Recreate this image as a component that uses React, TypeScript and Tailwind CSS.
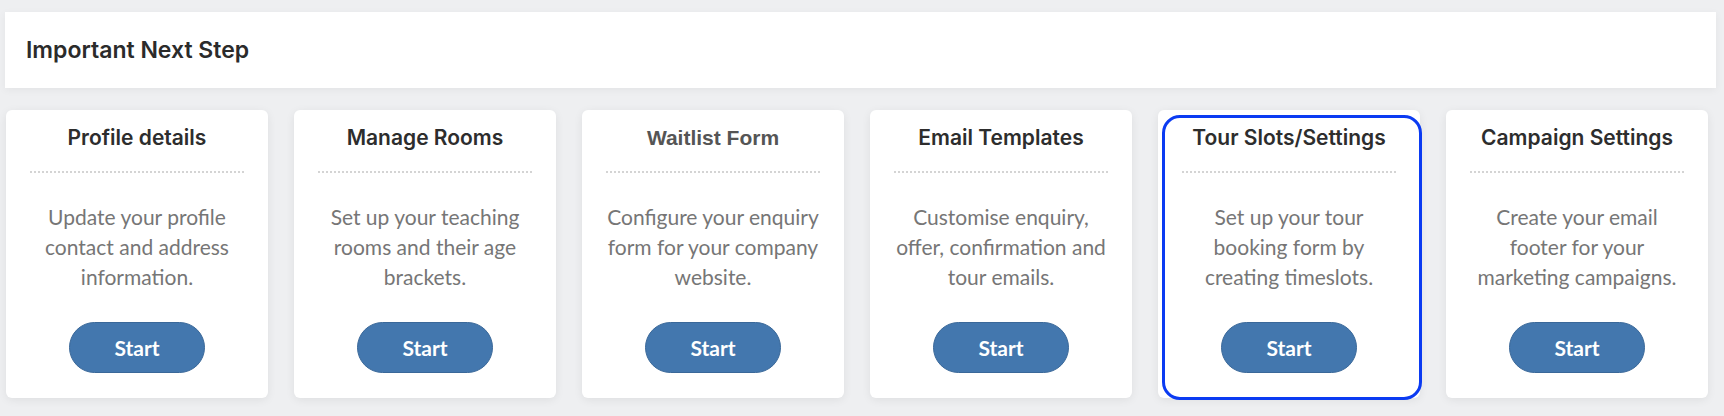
const steps = [
  { title: "Profile details", lines: ["Update your profile", "contact and address", "information."] },
  { title: "Manage Rooms", lines: ["Set up your teaching", "rooms and their age", "brackets."] },
  { title: "Waitlist Form", lines: ["Configure your enquiry", "form for your company", "website."], plain: true },
  { title: "Email Templates", lines: ["Customise enquiry,", "offer, confirmation and", "tour emails."] },
  { title: "Tour Slots/Settings", lines: ["Set up your tour", "booking form by", "creating timeslots."], active: true },
  { title: "Campaign Settings", lines: ["Create your email", "footer for your", "marketing campaigns."] },
];

function StepCard({ step }: { step: (typeof steps)[number] }) {
  return (
    <div className="relative bg-white rounded-md shadow-[0_2px_10px_rgba(0,0,0,0.07)] h-[288px] flex flex-col items-center pt-4 pb-[25px]">
      {step.active && (
        <div className="absolute left-[4px] top-[5px] -right-[2px] -bottom-[2px] rounded-[18px] border-[3px] border-[#0b3bf2] pointer-events-none" />
      )}
      <h3
        className={
          step.plain
            ? "text-[21px] leading-6 font-bold text-[#555555] font-['Liberation_Sans',Arial,sans-serif]"
            : "text-[21px] leading-6 font-semibold text-[#2d2d2d] font-['Inter',sans-serif]"
        }
      >
        {step.title}
      </h3>
      <div className="self-stretch mx-6 mt-[21px] border-t-2 border-dotted border-[#d4d4d4]" />
      <p className="mt-[29px] text-center text-[21px] leading-[30px] text-[#767676] font-['Lato',sans-serif]">
        {step.lines.map((l, i) => (
          <span key={i} className="block whitespace-nowrap">
            {l}
          </span>
        ))}
      </p>
      <button className="mt-[30px] w-[136px] h-[51px] rounded-full bg-[#4377ae] border border-[#3a6899] text-white text-[21px] font-bold font-['Lato',sans-serif]">
        Start
      </button>
    </div>
  );
}

export default function App() {
  return (
    <div className="min-h-screen bg-[#eeeff1] pt-3 pl-[5px] pr-2">
      <div className="bg-white h-[76px] flex items-center pl-[21px] shadow-[0_2px_8px_rgba(0,0,0,0.05)]">
        <h2 className="text-[23px] font-semibold text-[#2b2b2b] font-['Inter',sans-serif]">Important Next Step</h2>
      </div>
      <div className="mt-[22px] pl-px pr-2 grid grid-cols-6 gap-[26px]">
        {steps.map((s) => (
          <StepCard key={s.title} step={s} />
        ))}
      </div>
    </div>
  );
}
